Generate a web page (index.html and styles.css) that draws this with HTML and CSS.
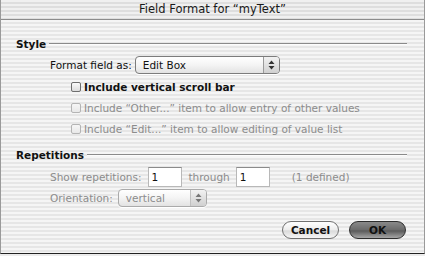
FILE: index.html
```html
<!DOCTYPE html>
<html lang="en">
<head>
    <meta charset="UTF-8">
    <title>Field Format</title>
    <link rel="stylesheet" href="styles.css">
</head>
<body>
    <div class="window">
        <div class="titlebar">Field Format for “myText”</div>

        <div class="content">
            <div class="group-head">
                <span>Style</span>
                <div class="rule"></div>
            </div>

            <div class="row row-format">
                <span class="label">Format field as:</span>
                <div class="popup popup-wide">
                    <span class="popup-text">Edit Box</span>
                    <span class="popup-arrows">
                        <svg width="7" height="10" viewBox="0 0 7 10"><path d="M3.5 0.5L6.5 4H0.5Z M3.5 9.5L6.5 6H0.5Z" fill="#333"/></svg>
                    </span>
                </div>
            </div>

            <div class="row check-row">
                <span class="checkbox"></span>
                <span class="strong">Include vertical scroll bar</span>
            </div>
            <div class="row check-row disabled">
                <span class="checkbox"></span>
                <span>Include “Other...” item to allow entry of other values</span>
            </div>
            <div class="row check-row disabled">
                <span class="checkbox"></span>
                <span>Include “Edit...” item to allow editing of value list</span>
            </div>

            <div class="group-head group-reps">
                <span>Repetitions</span>
                <div class="rule"></div>
            </div>

            <div class="row row-reps disabled">
                <span class="label">Show repetitions:</span>
                <div class="field">1</div>
                <span class="label">through</span>
                <div class="field">1</div>
                <span class="note">(1 defined)</span>
            </div>

            <div class="row row-orient disabled">
                <span class="label">Orientation:</span>
                <div class="popup popup-small">
                    <span class="popup-text">vertical</span>
                    <span class="popup-arrows">
                        <svg width="7" height="10" viewBox="0 0 7 10"><path d="M3.5 0.5L6.5 4H0.5Z M3.5 9.5L6.5 6H0.5Z" fill="#777"/></svg>
                    </span>
                </div>
            </div>

            <div class="buttons">
                <button class="btn btn-cancel">Cancel</button>
                <button class="btn btn-ok">OK</button>
            </div>
        </div>
    </div>
</body>
</html>
```

FILE: styles.css
```css
* {
    margin: 0;
    padding: 0;
    box-sizing: border-box;
}

html {
    background: #ececec;
}

body {
    font-family: "Lucida Grande", "DejaVu Sans", sans-serif;
    font-size: 10.5px;
    color: #111;
}

.window {
    width: 425px;
    height: 254px;
    border-left: 1px solid #9a9a9a;
    border-right: 1px solid #9a9a9a;
    border-bottom: 1px solid #222;
    background: repeating-linear-gradient(to bottom, #f5f5f5 0, #f5f5f5 2px, #e6e6e6 2px, #e6e6e6 4px);
}

.titlebar {
    height: 20px;
    line-height: 19px;
    text-align: center;
    font-size: 11.5px;
    color: #1a1a1a;
    border-bottom: 1px solid #8c8c8c;
    background: repeating-linear-gradient(to bottom, #f0f0f0 0, #f0f0f0 2px, #dedede 2px, #dedede 4px);
}

.content {
    padding: 0 17px 0 15px;
}

.group-head {
    display: flex;
    align-items: center;
    gap: 3px;
    height: 14px;
    margin-top: 17px;
    font-weight: bold;
}

.rule {
    flex: 1;
    border-top: 1px solid #8a8a8a;
    border-bottom: 1px solid #fcfcfc;
}

.row {
    display: flex;
    align-items: center;
}

.strong {
    font-weight: bold;
}

.disabled {
    color: #8c8c8c;
}

.row-format {
    height: 20px;
    margin-top: 4px;
    padding-left: 34px;
    gap: 3px;
}

.popup {
    display: flex;
    height: 18px;
    border: 1px solid #7c7c7c;
    border-radius: 4px;
    background: linear-gradient(to bottom, #ffffff, #f4f4f4 50%, #e2e2e2);
    box-shadow: 0 1px 0 #fff;
    overflow: hidden;
}

.popup-text {
    flex: 1;
    padding-left: 7px;
    line-height: 16px;
}

.popup-arrows {
    width: 16px;
    display: flex;
    align-items: center;
    justify-content: center;
    border-left: 1px solid #9a9a9a;
    background: linear-gradient(to bottom, #f2f2f2, #d0d0d0);
}

.popup-wide {
    width: 145px;
}

.check-row {
    height: 21px;
    padding-left: 55px;
    gap: 3px;
}

.row-format + .check-row {
    margin-top: 1px;
}

.checkbox {
    width: 10px;
    height: 10px;
    border: 1px solid #6e6e6e;
    border-radius: 2px;
    background: linear-gradient(to bottom, #fafafa, #dcdcdc);
}

.disabled .checkbox {
    border-color: #b4b4b4;
    background: linear-gradient(to bottom, #f6f6f6, #e8e8e8);
}

.group-reps {
    margin-top: 9px;
}

.row-reps {
    height: 20px;
    margin-top: 5px;
    padding-left: 34px;
}

.field {
    width: 34px;
    height: 20px;
    margin-left: 6px;
    margin-right: 7px;
    padding-left: 3px;
    line-height: 19px;
    color: #111;
    background: #fff;
    border: 1px solid #b8b8b8;
    border-top-color: #8a8a8a;
}

.note {
    margin-left: 15px;
}

.row-orient {
    height: 18px;
    margin-top: 2px;
    padding-left: 34px;
    gap: 5px;
}

.popup-small {
    width: 89px;
    border-color: #aaaaaa;
}

.popup-small .popup-arrows {
    border-left-color: #c0c0c0;
}

.buttons {
    display: flex;
    justify-content: flex-end;
    gap: 10px;
    margin-top: 14px;
    padding-right: 1px;
}

.btn {
    width: 57px;
    height: 18px;
    border-radius: 9px;
    font-family: inherit;
    font-size: 10.5px;
    font-weight: bold;
    color: #111;
}

.btn-cancel {
    border: 1px solid #707070;
    background: linear-gradient(to bottom, #ffffff, #ececec 50%, #dadada 55%, #f6f6f6);
}

.btn-ok {
    border: 1px solid #2e2e2e;
    background: linear-gradient(to bottom, #8a8a8a, #6a6a6a 50%, #5a5a5a 55%, #a6a6a6);
}
```
